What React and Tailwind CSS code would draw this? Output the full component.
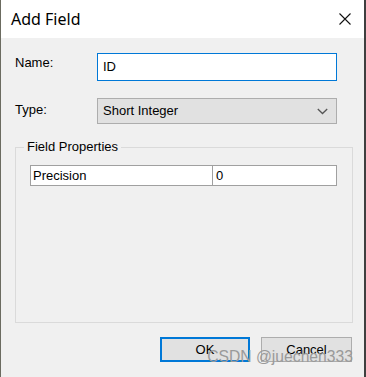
import React from "react";

const ui = { fontFamily: '"Liberation Sans", Arial, sans-serif' };

function CloseIcon() {
  return (
    <svg width="12" height="12" viewBox="0 0 12 12" className="block">
      <path d="M0.5 0.5 L11.5 11.5 M11.5 0.5 L0.5 11.5" stroke="#111" strokeWidth="1.1" fill="none" />
    </svg>
  );
}

function Chevron() {
  return (
    <svg width="11" height="7" viewBox="0 0 11 7" className="block">
      <path d="M0.8 1 L5.5 5.5 L10.2 1" stroke="#555" strokeWidth="1.3" fill="none" />
    </svg>
  );
}

export default function App() {
  return (
    <div className="w-[366px] h-[377px] flex bg-[#3f3f3f] overflow-hidden" style={ui}>
      <div className="w-[364px] h-full flex flex-col border-l border-[#6b6b60]">
        {/* TITLE BAR */}
        <div className="h-[38px] bg-white flex items-center justify-between pl-[10px] pr-[13px]">
          <span className="text-[16px] text-black" style={{ fontFamily: '"Noto Sans", sans-serif' }}>
            Add Field
          </span>
          <CloseIcon />
        </div>

        {/* BODY */}
        <div className="flex-1 bg-[#f0f0f0] flex flex-col pl-[14px] pr-[11px] text-[13px] text-black">
          <div className="flex mt-[15px] h-[28px]">
            <span className="w-[82px]">Name:</span>
            <div className="w-[240px] h-[28px] bg-white border border-[#0078d7] flex items-center pl-[5px]">
              ID
            </div>
          </div>

          <div className="flex mt-[17px] h-[26px]">
            <span className="w-[82px] pt-[2px]">Type:</span>
            <div className="w-[240px] h-[26px] bg-[#e1e1e1] border border-[#adadad] flex items-center justify-between pl-[5px] pr-[8px]">
              <span>Short Integer</span>
              <Chevron />
            </div>
          </div>

          {/* FIELD PROPERTIES GROUP */}
          <fieldset className="mt-[16px] h-[183px] w-[338px] border border-[#dadada]">
            <legend className="ml-[8px] px-[3px] leading-[14px]">Field Properties</legend>
            <div className="ml-[14px] mt-[11px] w-[307px] h-[21px] flex bg-white border border-[#a0a0a0]">
              <div className="w-[182px] border-r border-[#a0a0a0] pl-[2px] leading-[19px]">Precision</div>
              <div className="flex-1 pl-[3px] leading-[19px]">0</div>
            </div>
          </fieldset>

          <div className="relative flex justify-end gap-[11px] mt-[14px] pr-[1px]">
            <button className="w-[90px] h-[25px] bg-[#e1e1e1] border-2 border-[#0078d7] text-[13px] leading-none">
              OK
            </button>
            <button className="w-[91px] h-[25px] bg-[#e1e1e1] border border-[#adadad] text-[13px] leading-none">
              Cancel
            </button>
            <span className="absolute right-[0px] top-[12px] text-[15.7px] leading-none text-[#9a9a9a] whitespace-nowrap">
              CSDN @juechen333
            </span>
          </div>
        </div>
      </div>
    </div>
  );
}
